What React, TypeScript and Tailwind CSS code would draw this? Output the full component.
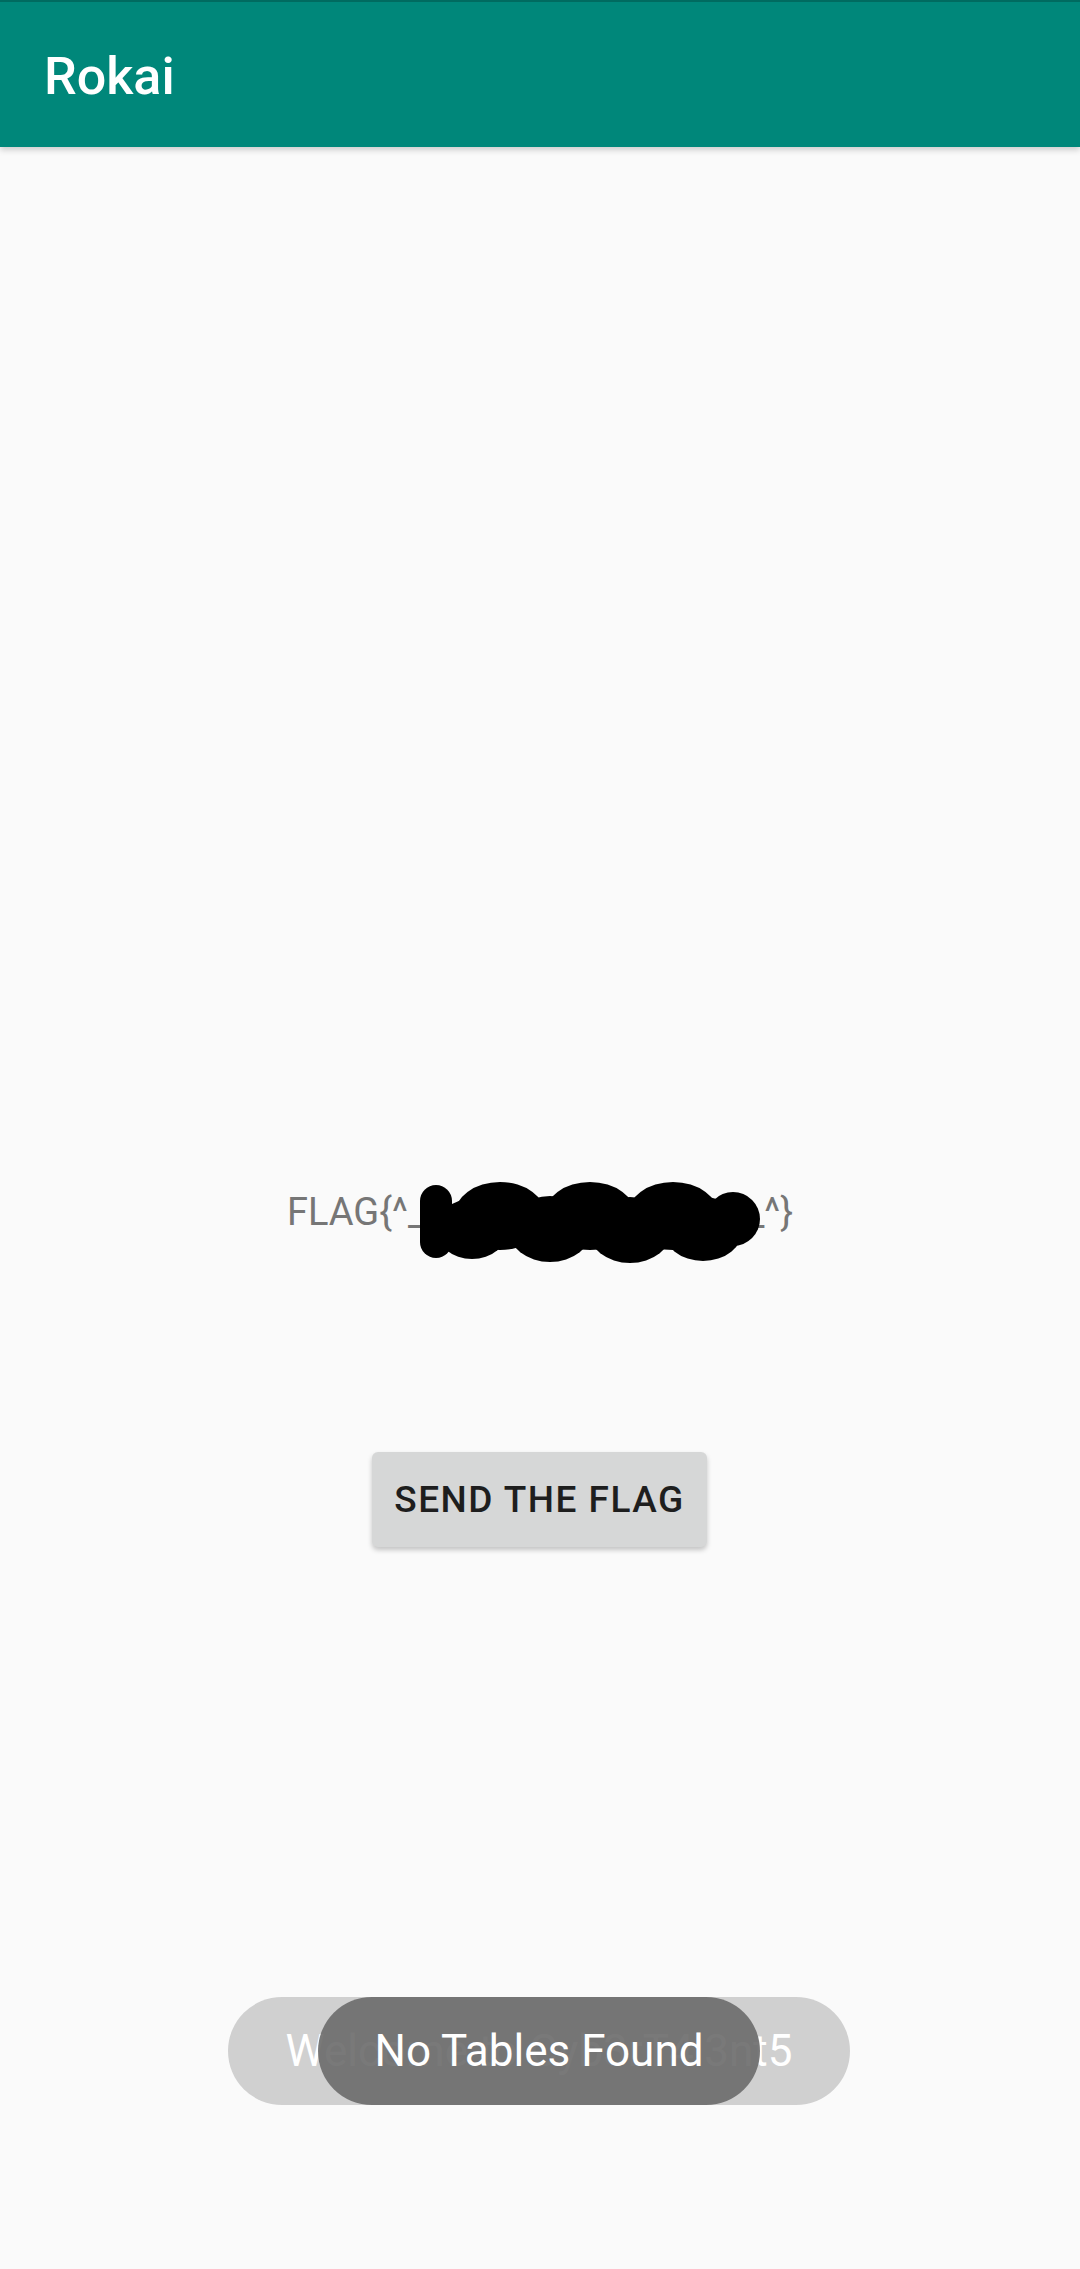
export default function App() {
  return (
    <div
      className="relative w-[1080px] h-[2269px] bg-[#fafafa] flex flex-col overflow-hidden"
      style={{ fontFamily: 'Roboto, "Noto Sans", sans-serif' }}
    >
      {/* App bar */}
      <header className="h-[147px] bg-[#00877a] border-t-[2px] border-[#006b60] shadow-[0_3px_6px_rgba(0,0,0,0.18)] pl-[44px] pt-[44px] z-10">
        <h1 className="text-[52px] leading-[61px] font-medium text-white">Rokai</h1>
      </header>

      {/* Flag text */}
      <div className="flex justify-center mt-[1042px]">
        <div className="flex items-center text-[38px] leading-[46px] text-[#767676]">
          <span>FLAG{'{'}^_</span>
          <span className="relative inline-block w-[322px] h-[46px]">
            {/* scribble over the hidden part */}
            <svg
              className="absolute left-[-5px] top-[-7px]"
              width="340"
              height="82"
              viewBox="0 0 340 82"
            >
              <g fill="#000">
                <rect x="0" y="3" width="32" height="73" rx="16" />
                <rect x="28" y="28" width="290" height="30" />
                <ellipse cx="80" cy="34" rx="46" ry="34" />
                <ellipse cx="170" cy="34" rx="46" ry="34" />
                <ellipse cx="253" cy="34" rx="46" ry="34" />
                <circle cx="313" cy="37" r="27" />
                <ellipse cx="52" cy="47" rx="36" ry="30" />
                <ellipse cx="130" cy="47" rx="42" ry="33" />
                <ellipse cx="210" cy="48" rx="42" ry="33" />
                <ellipse cx="283" cy="47" rx="40" ry="32" />
              </g>
            </svg>
          </span>
          <span>_^{'}'}</span>
        </div>
      </div>

      {/* Button */}
      <div className="flex justify-center mt-[217px]">
        <button className="w-[335px] h-[95px] ml-[-1px] rounded-[6px] bg-[#d6d7d7] shadow-[0_3px_5px_rgba(0,0,0,0.22)] text-[37px] font-medium tracking-[0.04em] text-[#1e1e1e]">
          SEND THE FLAG
        </button>
      </div>

      {/* Toasts */}
      <div className="absolute left-[228px] top-[1997px] w-[622px] h-[108px] rounded-full bg-[#d0d0d0] flex items-center justify-center">
        <span className="whitespace-nowrap text-[44px] leading-[52px] text-white">
          Welcome to Cyb3rT4l3nt5
        </span>
      </div>
      <div className="absolute left-[318px] top-[1997px] w-[442px] h-[108px] rounded-full bg-[#6a6a6a]/90 flex items-center justify-center">
        <span className="whitespace-nowrap text-[44px] leading-[52px] text-white">
          No Tables Found
        </span>
      </div>
    </div>
  )
}
